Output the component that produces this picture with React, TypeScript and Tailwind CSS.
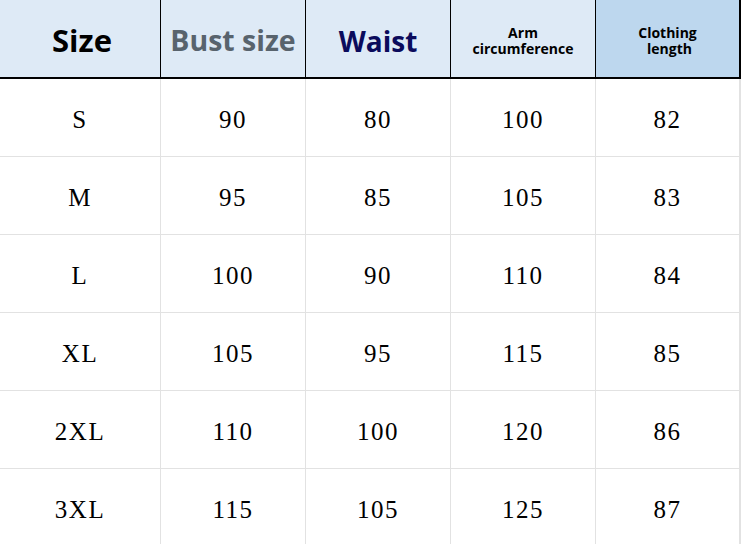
import React from "react";

const rows = [
  ["S", "90", "80", "100", "82"],
  ["M", "95", "85", "105", "83"],
  ["L", "100", "90", "110", "84"],
  ["XL", "105", "95", "115", "85"],
  ["2XL", "110", "100", "120", "86"],
  ["3XL", "115", "105", "125", "87"],
];

const cols = "grid grid-cols-[161px_145px_145px_145px_145px]";

export default function App() {
  return (
    <div className="w-[744px] h-[544px] overflow-hidden bg-white">
      <div className="w-[741px]">
        {/* header */}
        <div className={`${cols} h-[79px] border-b-2 border-black font-['Open_Sans','Noto_Sans',sans-serif] font-bold`}>
          <div className="flex items-center justify-center bg-[#deeaf6] border-r border-black text-[31px] text-black pt-1 pl-1">
            Size
          </div>
          <div className="flex items-center justify-center bg-[#deeaf6] border-r border-black text-[28.5px] text-[#58636d] pt-1">
            Bust size
          </div>
          <div className="flex items-center justify-center bg-[#deeaf6] border-r border-black text-[28px] text-[#0b0b5c] pt-1">
            Waist
          </div>
          <div className="flex flex-col items-center justify-center bg-[#deeaf6] border-r border-black text-[14px] leading-[16px] text-black pt-1">
            <span>Arm</span>
            <span>circumference</span>
          </div>
          <div className="flex flex-col items-center justify-center bg-[#bdd7ee] border-r-2 border-black text-[14px] leading-[16px] text-black pt-1">
            <span>Clothing</span>
            <span className="pl-1">length</span>
          </div>
        </div>
        {/* body */}
        {rows.map((r, i) => (
          <div
            key={i}
            className={`${cols} h-[78px] border-b border-[#e2e2e2] font-['Liberation_Serif','DejaVu_Serif',serif] text-[25px] text-black tracking-[1.5px]`}
          >
            {r.map((c, j) => (
              <div
                key={j}
                className={`flex items-center justify-center pt-1 border-[#e2e2e2] ${j === 4 ? "border-r-2" : "border-r"}`}
              >
                {c}
              </div>
            ))}
          </div>
        ))}
      </div>
    </div>
  );
}
